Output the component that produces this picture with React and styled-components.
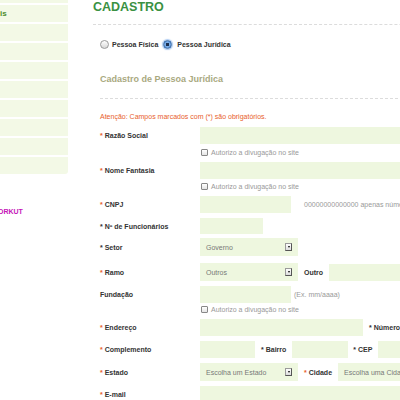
import React from 'react';
import styled, { createGlobalStyle, css } from 'styled-components';

const GlobalStyle = createGlobalStyle`
  body {
    margin: 0;
    background: #fff;
    font-family: "Liberation Sans", Arial, sans-serif;
  }
`;

const Page = styled.div`
  display: flex;
  width: 400px;
  height: 400px;
  overflow: hidden;
`;

const Sidebar = styled.div`
  width: 68px;
  flex-shrink: 0;
  display: flex;
  flex-direction: column;
  overflow: hidden;
`;

const Menu = styled.div`
  display: flex;
  flex-direction: column;
  gap: 2px;
  margin-top: -14px;
`;

const MenuItem = styled.div`
  height: 17px;
  background: #f3f9e6;
  display: flex;
  align-items: center;
  font-size: 8px;
  font-weight: bold;
  color: #4b8b2b;
  &:last-child {
    border-bottom-right-radius: 3px;
  }
`;

const Orkut = styled.div`
  margin-top: 33px;
  margin-left: -2px;
  font-size: 7px;
  line-height: 9px;
  font-weight: bold;
  color: #c515b8;
`;

const Main = styled.div`
  flex: none;
  width: 420px;
  margin-left: 25px;
`;

const Title = styled.h1`
  margin: 0;
  font-size: 12.5px;
  line-height: 15px;
  font-weight: bold;
  color: #3a9142;
`;

const Divider = styled.div`
  height: 0;
  border-top: 1px dashed #dcdcdc;
  margin-top: ${p => p.$mt}px;
`;

const Form = styled.div`
  padding-left: 7px;
`;

const RadioRow = styled.div`
  display: flex;
  align-items: center;
  height: 10px;
  margin-top: 14px;
  font-size: 7px;
  font-weight: bold;
  color: #333;
`;

const Radio = styled.span`
  width: 9px;
  height: 9px;
  box-sizing: border-box;
  border-radius: 50%;
  border: 1px solid #9a9a9a;
  background: linear-gradient(#fff, #d8d8d8);
  margin-right: 3px;
  ${p =>
    p.$checked &&
    css`
      border-color: #3d6ea8;
      background: radial-gradient(circle, #1b2f4f 0 1.5px, #7fb0e8 2px, #3b78c4 100%);
      box-shadow: 0 0 1px 1px rgba(90, 150, 230, 0.5);
      margin-left: 5px;
      margin-right: 5px;
    `}
`;

const Subtitle = styled.h2`
  margin: 25px 0 0;
  font-size: 9px;
  line-height: 11px;
  font-weight: bold;
  color: #a9a97f;
`;

const Attention = styled.p`
  margin: 13px 0 6px;
  font-size: 7px;
  line-height: 9px;
  color: #e8602c;
`;

const Row = styled.div`
  display: flex;
  align-items: center;
  margin-bottom: ${p => p.$mb ?? 5}px;
`;

const Label = styled.span`
  width: 100px;
  flex-shrink: 0;
  font-size: 7px;
  font-weight: bold;
  color: #333;
`;

const InlineLabel = styled.span`
  margin: 0 6px;
  font-size: 7px;
  font-weight: bold;
  color: #333;
  white-space: nowrap;
`;

const Star = styled.span`
  color: ${p => (p.$plain ? '#333' : '#e8602c')};
`;

const Input = styled.div`
  height: ${p => p.$h ?? 17}px;
  width: ${p => p.$w}px;
  flex-shrink: 0;
  background: #eef7df;
`;

const Select = styled.div`
  height: 18px;
  width: ${p => p.$w ?? 98}px;
  flex-shrink: 0;
  box-sizing: border-box;
  padding: 0 6px 0 6px;
  display: flex;
  align-items: center;
  background: #eef7df;
  font-size: 7px;
  color: #777;
  white-space: nowrap;
  overflow: hidden;
`;

const Arrow = styled.span`
  margin-left: auto;
  width: 7px;
  height: 8px;
  box-sizing: border-box;
  border: 1px solid #9a9a9a;
  border-right-color: #555;
  border-bottom-color: #555;
  background: linear-gradient(#fff, #ddd);
  display: flex;
  align-items: center;
  justify-content: center;
  &::after {
    content: '';
    border-left: 1.5px solid transparent;
    border-right: 1.5px solid transparent;
    border-top: 2px solid #000;
  }
`;

const Hint = styled.span`
  margin-left: ${p => p.$ml}px;
  font-size: 7px;
  color: #999;
  white-space: nowrap;
`;

const CheckRow = styled.div`
  display: flex;
  align-items: center;
  height: 10px;
  padding-left: 101px;
  margin-bottom: 5px;
  font-size: 7px;
  color: #999;
`;

const Checkbox = styled.span`
  width: 7px;
  height: 7px;
  box-sizing: border-box;
  border: 1px solid #888;
  border-radius: 1px;
  background: linear-gradient(#fff, #e4e4e4);
  margin-right: 3px;
`;

const Req = ({ children, plain }) => (
  <>
    <Star $plain={plain}>*</Star> {children}
  </>
);

const Authorize = () => (
  <CheckRow>
    <Checkbox />
    Autorizo a divugação no site
  </CheckRow>
);

const Dropdown = ({ value, w }) => (
  <Select $w={w}>
    {value}
    {w === undefined && <Arrow />}
  </Select>
);

export default function App() {
  return (
    <>
      <GlobalStyle />
      <Page>
        <Sidebar>
          <Menu>
            <MenuItem />
            <MenuItem>is</MenuItem>
            {Array.from({ length: 8 }).map((_, i) => (
              <MenuItem key={i} />
            ))}
          </Menu>
          <Orkut>ORKUT</Orkut>
        </Sidebar>

        <Main>
          <Title>CADASTRO</Title>
          <Divider $mt={9} />
          <Form>
            <RadioRow>
              <Radio />
              Pessoa Física
              <Radio $checked />
              Pessoa Jurídica
            </RadioRow>
            <Subtitle>Cadastro de Pessoa Jurídica</Subtitle>
            <Divider $mt={13} />
            <Attention>Atenção: Campos marcados com (*) são obrigatórios.</Attention>

            <Row $mb={3}>
              <Label><Req>Razão Social</Req></Label>
              <Input $w={220} />
            </Row>
            <Authorize />
            <Row $mb={2}>
              <Label><Req>Nome Fantasia</Req></Label>
              <Input $w={220} />
            </Row>
            <Authorize />
            <Row>
              <Label><Req>CNPJ</Req></Label>
              <Input $w={91} />
              <Hint $ml={13}>00000000000000 apenas números</Hint>
            </Row>
            <Row $mb={4}>
              <Label><Req plain>Nº de Funcionários</Req></Label>
              <Input $w={63} $h={16} />
            </Row>
            <Row $mb={7}>
              <Label><Req plain>Setor</Req></Label>
              <Dropdown value="Governo" />
            </Row>
            <Row>
              <Label><Req>Ramo</Req></Label>
              <Dropdown value="Outros" />
              <InlineLabel>Outro</InlineLabel>
              <Input $w={90} />
            </Row>
            <Row $mb={1}>
              <Label>Fundação</Label>
              <Input $w={91} />
              <Hint $ml={3}>(Ex. mm/aaaa)</Hint>
            </Row>
            <Authorize />
            <Row>
              <Label><Req>Endereço</Req></Label>
              <Input $w={163} />
              <InlineLabel><Req plain>Número</Req></InlineLabel>
            </Row>
            <Row>
              <Label><Req>Complemento</Req></Label>
              <Input $w={55} />
              <InlineLabel><Req plain>Bairro</Req></InlineLabel>
              <Input $w={56} />
              <InlineLabel style={{ marginLeft: 5 }}><Req plain>CEP</Req></InlineLabel>
              <Input $w={40} />
            </Row>
            <Row>
              <Label><Req>Estado</Req></Label>
              <Dropdown value="Escolha um Estado" />
              <InlineLabel><Req>Cidade</Req></InlineLabel>
              <Dropdown value="Escolha uma Cidade" w={90} />
            </Row>
            <Row>
              <Label><Req>E-mail</Req></Label>
              <Input $w={220} />
            </Row>
          </Form>
        </Main>
      </Page>
    </>
  );
}
